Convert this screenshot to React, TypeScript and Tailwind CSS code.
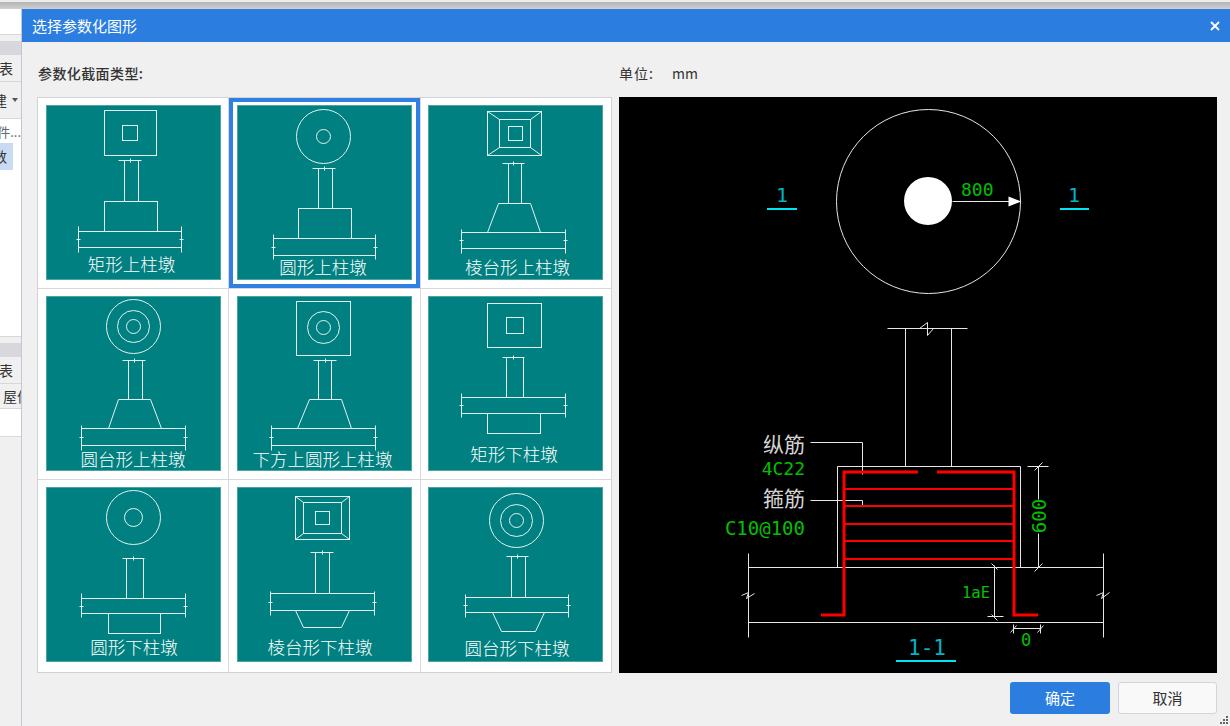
import type { ReactNode } from 'react';

const LINE = '#e4f2f1';

function Rect({ x1, y1, x2, y2 }: { x1: number; y1: number; x2: number; y2: number }) {
    return <rect x={x1} y={y1} width={x2 - x1} height={y2 - y1} fill="none" stroke={LINE} />;
}

function Circles({ cx, cy, radii }: { cx: number; cy: number; radii: number[] }) {
    return (
        <>
            {radii.map((r) => (
                <circle key={r} cx={cx} cy={cy} r={r} fill="none" stroke={LINE} />
            ))}
        </>
    );
}

// the stepped square seen from above
function Frustum({ o, m, n }: { o: number[]; m: number[]; n: number[] }) {
    return (
        <>
            <Rect x1={o[0]} y1={o[1]} x2={o[2]} y2={o[3]} />
            <Rect x1={m[0]} y1={m[1]} x2={m[2]} y2={m[3]} />
            <Rect x1={n[0]} y1={n[1]} x2={n[2]} y2={n[3]} />
            <path
                d={`M${o[0]} ${o[1]}L${m[0]} ${m[1]}M${o[2]} ${o[1]}L${m[2]} ${m[1]}M${o[0]} ${o[3]}L${m[0]} ${m[3]}M${o[2]} ${o[3]}L${m[2]} ${m[3]}`}
                stroke={LINE}
            />
        </>
    );
}

type ColumnProps = {
    tick: number[];
    colL: number;
    colR: number;
    colBottom: number;
    plate: number[];
    ends: number[];
};

// column with its break mark, and the slab with both end marks
function Column({ tick, colL, colR, colBottom, plate, ends }: ColumnProps) {
    const [tx1, tx2, ty] = tick;
    const [px1, px2, py1, py2] = plate;
    const mid = Math.round((py1 + py2) / 2);
    const tm = Math.round((tx1 + tx2) / 2);
    return (
        <path
            d={`M${tx1} ${ty}H${tx2}M${tm} ${ty - 2}V${ty + 2}M${colL} ${ty}V${colBottom}M${colR} ${ty}V${colBottom}M${px1} ${py1}H${px2}M${px1} ${py2}H${px2}M${px1} ${ends[0]}V${ends[1]}M${px2} ${ends[0]}V${ends[1]}M${px1 - 2} ${mid}H${px1 + 2}M${px2 - 2} ${mid}H${px2 + 2}`}
            fill="none"
            stroke={LINE}
        />
    );
}

const tiles: { label: string; lx: number; ly: number; art: ReactNode }[] = [
    {
        label: '矩形上柱墩',
        lx: 85.5,
        ly: 161,
        art: (
            <>
                <Rect x1={58} y1={5} x2={110} y2={50} />
                <Rect x1={76} y1={20} x2={91} y2={35} />
                <Column tick={[72, 95, 55]} colL={78} colR={92} colBottom={96} plate={[32, 135, 126, 142]} ends={[121, 147]} />
                <Rect x1={58} y1={96} x2={111} y2={126} />
            </>
        ),
    },
    {
        label: '圆形上柱墩',
        lx: 86,
        ly: 164,
        art: (
            <>
                <Circles cx={86} cy={31} radii={[27, 7]} />
                <Column tick={[75, 98, 63]} colL={81} colR={95} colBottom={103} plate={[36, 138, 133, 150]} ends={[129, 154]} />
                <Rect x1={61} y1={103} x2={114} y2={133} />
            </>
        ),
    },
    {
        label: '棱台形上柱墩',
        lx: 89.5,
        ly: 164,
        art: (
            <>
                <Frustum o={[59, 6, 113, 50]} m={[71, 14, 102, 42]} n={[80, 21, 94, 35]} />
                <Column tick={[74, 96, 58]} colL={80} colR={93} colBottom={98} plate={[33, 137, 127, 143]} ends={[124, 148]} />
                <path d="M59 127L70 98H102L112 127" fill="none" stroke={LINE} />
            </>
        ),
    },
    {
        label: '圆台形上柱墩',
        lx: 87,
        ly: 165,
        art: (
            <>
                <Circles cx={87} cy={30} radii={[27, 16, 7]} />
                <Column tick={[76, 99, 64]} colL={82} colR={96} colBottom={103} plate={[35, 139, 132, 149]} ends={[129, 154]} />
                <path d="M62 132L72 103H104L115 132" fill="none" stroke={LINE} />
            </>
        ),
    },
    {
        label: '下方上圆形上柱墩',
        lx: 85.5,
        ly: 165,
        art: (
            <>
                <Rect x1={59} y1={5} x2={113} y2={59} />
                <Circles cx={86} cy={31} radii={[16, 7]} />
                <Column tick={[76, 99, 64]} colL={81} colR={94} colBottom={103} plate={[34, 138, 132, 149]} ends={[129, 154]} />
                <path d="M60 132L72 103H104L114 132" fill="none" stroke={LINE} />
            </>
        ),
    },
    {
        label: '矩形下柱墩',
        lx: 86,
        ly: 160,
        art: (
            <>
                <Rect x1={59} y1={7} x2={113} y2={51} />
                <Rect x1={78} y1={21} x2={95} y2={37} />
                <Column tick={[74, 96, 61]} colL={78} colR={95} colBottom={101} plate={[33, 137, 101, 117]} ends={[97, 121]} />
                <Rect x1={59} y1={117} x2={112} y2={137} />
            </>
        ),
    },
    {
        label: '圆形下柱墩',
        lx: 88,
        ly: 162,
        art: (
            <>
                <Circles cx={87} cy={30} radii={[27, 9]} />
                <Column tick={[76, 98, 71]} colL={80} colR={97} colBottom={111} plate={[35, 139, 111, 126]} ends={[106, 130]} />
                <Rect x1={62} y1={126} x2={114} y2={146} />
            </>
        ),
    },
    {
        label: '棱台形下柱墩',
        lx: 83,
        ly: 162,
        art: (
            <>
                <Frustum o={[58, 9, 112, 52]} m={[66, 15, 104, 46]} n={[78, 24, 92, 37]} />
                <Column tick={[73, 96, 65]} colL={78} colR={92} colBottom={106} plate={[33, 137, 106, 123]} ends={[104, 128]} />
                <path d="M58 123L66 140H104L112 123" fill="none" stroke={LINE} />
            </>
        ),
    },
    {
        label: '圆台形下柱墩',
        lx: 89,
        ly: 163,
        art: (
            <>
                <Circles cx={88} cy={33} radii={[27, 16, 7]} />
                <Column tick={[78, 100, 69]} colL={83} colR={97} colBottom={110} plate={[37, 140, 110, 125]} ends={[107, 130]} />
                <path d="M64 125L73 144H107L116 125" fill="none" stroke={LINE} />
            </>
        ),
    },
];

function Tile({ label, lx, ly, art }: { label: string; lx: number; ly: number; art: ReactNode }) {
    return (
        <div className="w-[175px] h-[175px] bg-[#008080] outline outline-1 -outline-offset-1 outline-[#4aa5a3]">
            <svg width="175" height="175" viewBox="0 0 175 175">
                <g transform="translate(0.5 0.5)">{art}</g>
                <text x={lx} y={ly} textAnchor="middle" dominantBaseline="middle" fill="#fff" className="text-[17.5px] font-light">
                    {label}
                </text>
            </svg>
        </div>
    );
}

function SectionDrawing() {
    const mono = 'font-["DejaVu_Sans_Mono",monospace]';
    return (
        <svg width="598" height="576" viewBox="619 97 598 576" className="block">
            <g transform="translate(0.5 0.5)" fill="none" stroke="#e6e6e6">
                {/* plan */}
                <circle cx="928" cy="201" r="92" />
                <path d="M952 201H1009" />
                <path d="M1008 196L1021 201L1008 206Z" fill="#fff" stroke="none" />
                {/* column */}
                <path d="M887 328H967M919 328L927 322L927 335L933 328M905 328V466M951 328V466" />
                {/* pedestal and slab */}
                <path d="M837 567V466H1020V567M748 567H1103M748 622H1103M748 553V637M1103 553V637" />
                <path d="M741 595L748 592L746 598L754 593M1096 595L1103 592L1101 598L1109 592" />
                {/* leaders */}
                <path d="M810 442H862V474M810 500H862V506" />
                {/* dimensions */}
                <path d="M1027 466H1048M1034 470L1042 462M1038 466V499M1038 533V567M1034 571L1042 563" />
                <path d="M994 565V616M987 616H1003M991 563L997 569M991 614L997 620" />
                <path d="M1013 628H1040M1013 624V633M1040 624V633M1010 632L1016 625M1037 632L1043 625" />
            </g>
            <circle cx="928" cy="201" r="24" fill="#fff" />
            {/* rebar */}
            <path d="M821 615H844V472H918M937 472H1014V615H1038" fill="none" stroke="#f00" strokeWidth="3" />
            <path d="M844 489H1014M844 506H1014M844 524H1014M844 541H1014M844 559H1014" stroke="#f00" strokeWidth="2" />
            {/* section marks */}
            <path d="M767 209H797M1060 209H1089M896 661H956" stroke="#00e5f5" strokeWidth="2" />
            <text x="782" y="202" textAnchor="middle" fill="#00b4c4" className={`text-[20px] ${mono}`}>1</text>
            <text x="1074" y="202" textAnchor="middle" fill="#00b4c4" className={`text-[20px] ${mono}`}>1</text>
            <text x="927" y="655" textAnchor="middle" fill="#00b4c4" className={`text-[21px] ${mono}`}>1-1</text>
            {/* labels */}
            <text x="961" y="196" fill="#00c000" className={`text-[18px] ${mono}`}>800</text>
            <text x="805" y="452" textAnchor="end" fill="#d4d4d4" className="text-[21px]">纵筋</text>
            <text x="805" y="475" textAnchor="end" fill="#00c000" className={`text-[18px] ${mono}`}>4C22</text>
            <text x="805" y="506" textAnchor="end" fill="#d4d4d4" className="text-[21px]">箍筋</text>
            <text x="805" y="535" textAnchor="end" fill="#00c000" className={`text-[19px] ${mono}`}>C10@100</text>
            <text x="962" y="598" fill="#00c000" className={`text-[15.5px] ${mono}`}>1aE</text>
            <text x="1026" y="646" textAnchor="middle" fill="#00c000" className={`text-[17px] ${mono}`}>0</text>
            <text x="1046" y="516" textAnchor="middle" transform="rotate(-90 1046 516)" fill="#00c000" className={`text-[19px] ${mono}`}>600</text>
        </svg>
    );
}

function Sidebar() {
    return (
        <aside className="w-[22px] shrink-0 flex flex-col overflow-hidden bg-white text-[14px] text-[#333] border-r border-[#c4c8d6]">
            <div className="h-[26px] bg-white border-b border-[#d8d8d8]" />
            <div className="h-[6px] bg-[#f0f0f0]" />
            <div className="h-[14px] bg-[#d8d8dc]" />
            <div className="h-[27px] bg-[#f0f0f0] border-b border-[#d8d8d8] flex items-center justify-end pr-[8px] whitespace-nowrap">表</div>
            <div className="h-[37px] bg-[#f0f0f0] border-b border-[#d8d8d8] flex items-center whitespace-nowrap">
                <span className="ml-[-7px]">建</span>
                <span className="ml-[5px] border-x-[3px] border-t-[4px] border-x-transparent border-t-[#555]" />
            </div>
            <div className="h-[24px] pt-[2px] flex items-center justify-end text-[13px] text-[#666] whitespace-nowrap">件...</div>
            <div className="h-[27px] w-[13px] bg-[#c9daf2] overflow-hidden flex items-center justify-end pr-[6px] whitespace-nowrap">数</div>
            <div className="flex-1 min-h-0" />
            <div className="h-[1px] bg-[#d8d8d8]" />
            <div className="h-[6px] bg-[#f0f0f0]" />
            <div className="h-[14px] bg-[#d8d8dc]" />
            <div className="h-[27px] bg-[#f0f0f0] border-b border-[#d8d8d8] flex items-center justify-end pr-[8px] whitespace-nowrap">表</div>
            <div className="h-[25px] bg-[#f0f0f0] border-b border-[#d8d8d8] flex items-center pl-[3px] whitespace-nowrap">屋信</div>
            <div className="h-[28px] bg-white border-b border-[#d8d8d8]" />
            <div className="h-[289px] bg-[#f0f0f0]" />
        </aside>
    );
}

export default function App() {
    return (
        <div className="relative w-[1230px] h-[726px] flex flex-col overflow-hidden bg-[#f0f0f0] font-['Noto_Sans_CJK_SC','Liberation_Sans',sans-serif]">
            {/* window behind the dialog */}
            <div className="h-[9px] shrink-0 border-t-2 border-[#ececec] bg-gradient-to-b from-[#b4b4b4] to-[#d0d0d0]" />
            <div className="flex-1 flex min-h-0">
                <Sidebar />
                <div className="flex-1 flex flex-col min-w-0">
                    <header className="h-[33px] shrink-0 bg-[#2b7ee0] flex items-center justify-between pl-[10px] pr-[10px] text-white">
                        <span className="text-[15px] leading-none">选择参数化图形</span>
                        <svg width="10" height="10" viewBox="0 0 10 10">
                            <path d="M1 1L9 9M9 1L1 9" stroke="#fff" strokeWidth="1.8" />
                        </svg>
                    </header>
                    <div className="flex-1 flex flex-col pl-[16px] min-h-0">
                        <div className="h-[55px] shrink-0 flex pt-[21px] text-[14px] leading-5 text-[#333]">
                            <span className="w-[581px] font-medium tracking-[0.4px]">参数化截面类型:</span>
                            <span className="w-[53px] tracking-[1px]">单位:</span>
                            <span>mm</span>
                        </div>
                        <div className="flex gap-[7px] ml-[-1px]">
                            <div className="w-[575px] h-[576px] grid grid-cols-[190px_191px_190px] grid-rows-[190px_190px_192px] gap-[1px] border border-[#d0d2d6] bg-[#d6d8dc]">
                                {tiles.map((t, i) => (
                                    <div
                                        key={t.label}
                                        className={
                                            i === 1
                                                ? 'bg-white border-4 border-[#2f80e2] pl-[4px] pt-[3px]'
                                                : i % 3 === 2
                                                  ? 'bg-white pl-[7px] pt-[7px]'
                                                  : 'bg-white pl-[8px] pt-[7px]'
                                        }
                                    >
                                        <Tile {...t} />
                                    </div>
                                ))}
                            </div>
                            <div className="w-[598px] h-[576px] bg-black">
                                <SectionDrawing />
                            </div>
                        </div>
                        <div className="flex justify-end gap-[8px] pt-[9px] pr-[13px] text-[15px]">
                            <button className="w-[100px] h-[32px] rounded-[3px] bg-[#2b7ee0] text-white">确定</button>
                            <button className="w-[99px] h-[32px] rounded-[3px] bg-[#f9f9f9] border border-[#d0d4e0] text-[#333]">取消</button>
                        </div>
                    </div>
                </div>
            </div>
            {/* resize grip */}
            <svg width="10" height="10" viewBox="0 0 10 10" className="absolute right-[1px] bottom-[1px]" fill="#666">
                <rect x="7" y="1" width="2" height="2" />
                <rect x="4" y="4" width="2" height="2" />
                <rect x="7" y="4" width="2" height="2" />
                <rect x="1" y="7" width="2" height="2" />
                <rect x="4" y="7" width="2" height="2" />
                <rect x="7" y="7" width="2" height="2" />
            </svg>
        </div>
    );
}
